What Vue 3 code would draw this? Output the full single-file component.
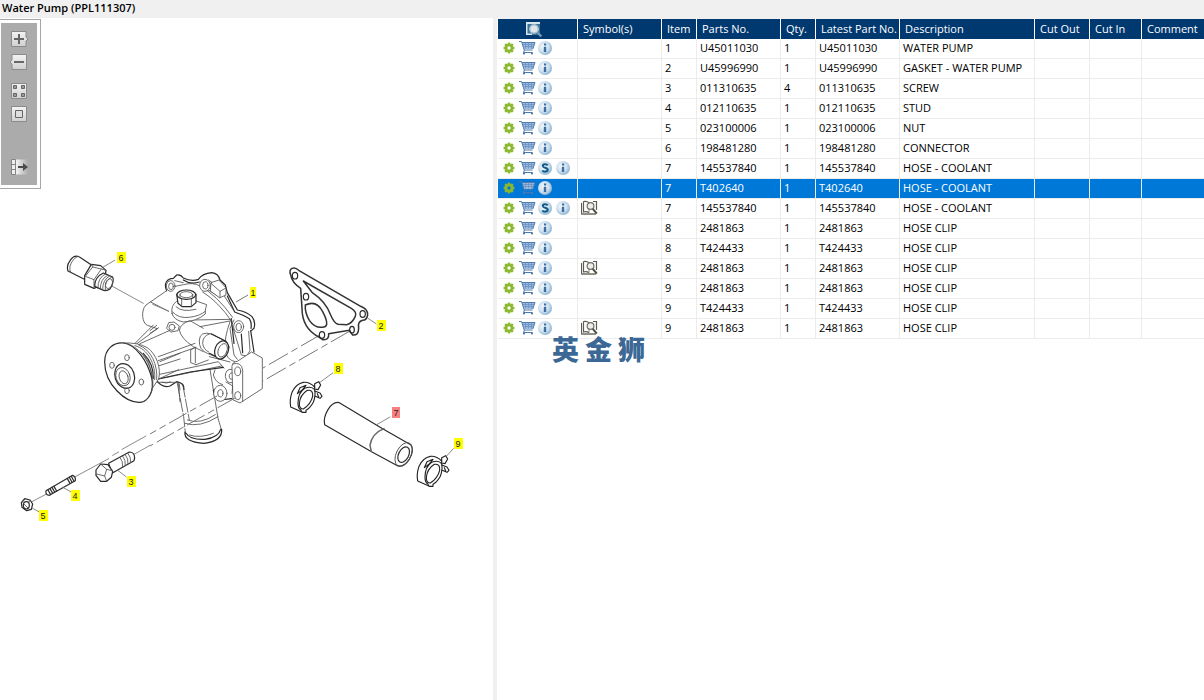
<script setup>
import { ref } from 'vue'

const rows = [
  ['1', 'U45011030', '1', 'WATER PUMP'],
  ['2', 'U45996990', '1', 'GASKET - WATER PUMP'],
  ['3', '011310635', '4', 'SCREW'],
  ['4', '012110635', '1', 'STUD'],
  ['5', '023100006', '1', 'NUT'],
  ['6', '198481280', '1', 'CONNECTOR'],
  ['7', '145537840', '1', 'HOSE - COOLANT', { sub: true }],
  ['7', 'T402640', '1', 'HOSE - COOLANT'],
  ['7', '145537840', '1', 'HOSE - COOLANT', { sub: true, book: true }],
  ['8', '2481863', '1', 'HOSE CLIP'],
  ['8', 'T424433', '1', 'HOSE CLIP'],
  ['8', '2481863', '1', 'HOSE CLIP', { book: true }],
  ['9', '2481863', '1', 'HOSE CLIP'],
  ['9', 'T424433', '1', 'HOSE CLIP'],
  ['9', '2481863', '1', 'HOSE CLIP', { book: true }],
].map(([item, part, qty, desc, flags = {}]) => ({ item, part, qty, desc, ...flags }))

const selected = ref(7)

const callouts = [
  { n: 6, x: 121, y: 258 },
  { n: 1, x: 253, y: 293 },
  { n: 2, x: 381, y: 326 },
  { n: 8, x: 338, y: 369 },
  { n: 7, x: 396, y: 413, active: true },
  { n: 9, x: 458, y: 444 },
  { n: 3, x: 131, y: 482 },
  { n: 4, x: 75, y: 496 },
  { n: 5, x: 43, y: 516 },
]
const teeth = [0, 45, 90, 135, 180, 225, 270, 315]
</script>

<template>
  <div class="app">
    <svg class="defs" aria-hidden="true">
      <defs>
        <linearGradient id="key" x1="0" y1="0" x2="0" y2="1">
          <stop offset="0" stop-color="#f4f4f4" /><stop offset="1" stop-color="#cfcfcf" />
        </linearGradient>
        <linearGradient id="fade" x1="0" y1="0" x2="1" y2="0">
          <stop offset="0" stop-color="#f4f4f4" /><stop offset="1" stop-color="#ababab" />
        </linearGradient>
        <radialGradient id="ball" cx=".4" cy=".4" r=".65">
          <stop offset="0" stop-color="#f4f9fc" /><stop offset=".55" stop-color="#cfe1ef" /><stop offset="1" stop-color="#86afd0" />
        </radialGradient>
        <symbol id="i-gear" viewBox="0 0 18 18">
          <g fill="#8bb92e">
            <rect v-for="a in teeth" :key="a" x="7.700" y="3.600" width="2.600" height="3" :transform="`rotate(${a} 9 9)`" />
          </g>
          <circle cx="9" cy="9" r="2.900" fill="none" stroke="#8bb92e" stroke-width="2.400" />
        </symbol>
        <symbol id="i-cart" viewBox="0 0 18 18">
          <path d="M4 3.500h13l-2.200 6.500H6z" fill="#9dbbe0" />
          <path d="M1 2.500h2.500l2.700 8.500h8.300M4 3.500h13l-2.200 6.500M6.500 11l-1 2.500h9" fill="none" stroke="#4d78ab" stroke-width="1" />
          <path d="M5 5.500h11M5.500 7.500h10M7.500 3.500v6M10.500 3.500v6M13.500 3.500v6" fill="none" stroke="#6b92c2" stroke-width=".8" />
          <circle cx="6" cy="14.500" r="1.100" fill="#4d78ab" /><circle cx="14" cy="14.500" r="1.100" fill="#4d78ab" />
        </symbol>
        <symbol id="i-info" viewBox="0 0 18 18">
          <circle cx="9" cy="9" r="7" fill="url(#ball)" />
          <path d="M8 4.600h2.200v1.900H8zM7.800 7.800h2.400V13H7.800z" fill="#3d6ea3" />
        </symbol>
        <symbol id="i-sub" viewBox="0 0 18 18">
          <circle cx="9" cy="9" r="7" fill="url(#ball)" />
          <path d="M11.700 6.400C10.600 4.800 6.700 4.900 6.800 7c.1 2.300 4.900 1.300 4.900 3.800 0 2.300-4.300 2.300-5.400.7" fill="none" stroke="#12598a" stroke-width="2" />
        </symbol>
        <symbol id="i-book" viewBox="0 0 18 16">
          <path d="M.5 3v11h14.500M2.500 1.500v10.500c2.500-.8 4-.5 5.500.8M2.500 1.500c2.500-.6 4 0 5.500 1.200M15.500 10V1.500h-3.500" fill="none" stroke="#5d5b52" stroke-width="1.200" />
          <path d="M.5 14h14" stroke="#8b897e" stroke-width="1.600" />
          <path d="M8 2.500v10" stroke="#8b897e" />
          <circle cx="9.500" cy="6" r="3.400" fill="#eeeeea" stroke="#6f6d64" stroke-width="1.200" />
          <path d="M11.800 8.800l4 4.800" stroke="#4e4c45" stroke-width="2" />
        </symbol>
      </defs>
    </svg>

    <header class="title">Water Pump (PPL111307)</header>
    <main class="panes">
      <section class="figure">
        <svg class="drawing" viewBox="0 18 493 682" role="img" aria-label="Water Pump">
          <g class="ink">
            <g class="thin">
              <path d="M350 331L263 381M320 335L263 368" stroke-dasharray="22 4 7 4" />
            </g>

            <!-- pump body -->
            <g transform="translate(150 260) scale(.3333)">
              <g class="p">
                <path fill="#fff" d="M48 90C40 70 52 55 70 55L80 45Q92 43 100 54L145 62Q158 43 185 38Q205 38 210 62L225 76L236 100L262 148L300 165Q318 178 312 205L302 212L310 280L337 295V385L270 428L245 418L225 422Q200 425 190 395L205 480L216 515Q216 548 165 551Q112 549 105 520L100 470L82 372L60 380Q35 382 20 362L-60 350L-60 310L20 200L-12 195Q-32 165 -8 134Z" stroke="none" />
                <path class="bold" d="M50 92C40 70 52 55 70 55L80 45Q92 43 100 54Q125 66 145 58Q158 40 185 38Q205 40 210 60L226 75L232 98L262 150Q290 155 306 170Q318 185 312 205L304 212M100 60Q122 75 148 66M232 108L254 156Q282 166 298 176Q306 188 303 205" />
                <path d="M50 92L-12 135C-28 150 -24 190 -8 196L22 206M74 62L100 68M72 80L100 74Q130 66 150 78L175 90L205 108M176 60L205 82M150 78Q200 105 248 172M158 96Q205 125 245 184M210 88L250 150" />
                <ellipse cx="62" cy="78" rx="13" ry="16" fill="#fff" /><ellipse cx="63" cy="79" rx="7" ry="10" />
                <ellipse cx="165" cy="76" rx="16" ry="18" fill="#fff" /><ellipse cx="166" cy="76" rx="8" ry="11" />
                <path d="M181 92L183 68L207 60L228 84V105L210 113ZM210 113V94L228 84M183 70L210 94" fill="#fff" />
                <!-- right cover bolts -->
                <path d="M252 180L240 205L252 285L262 298M240 185Q222 235 225 270Q230 300 255 305M248 200L274 285L290 288L300 272L296 214" />
                <path class="bold" d="M244 176L252 250M274 222L278 278M302 212L312 276" />
                <ellipse cx="266" cy="200" rx="15" ry="18" fill="#fff" /><ellipse cx="266" cy="201" rx="8" ry="11" />
                <!-- lower stem -->
                <path d="M82 368L100 470L106 520Q108 549 163 550Q214 547 215 515L204 478L180 325L100 335Z" fill="#fff" stroke="none" />
                <path d="M82 370L101 470L106 518M98 372L118 480" stroke-dasharray="40 6" />
                <path d="M180 328L204 475L214 508M104 490Q150 505 204 470M112 480Q150 495 196 464" />
                <path class="bold" d="M105 516Q100 545 162 550Q218 544 215 508M108 520Q120 540 165 538Q206 532 212 508" />
                <path d="M118 525Q150 536 190 520" />
                <!-- mounting block -->
                <path d="M246 318Q248 305 262 304L305 276L337 294V386L270 429L250 420Z" fill="#fff" />
                <path d="M248 312Q274 304 278 330V424" />
                <ellipse cx="263" cy="334" rx="9" ry="13" /><ellipse cx="263" cy="407" rx="9" ry="12" />
                <path d="M245 328Q226 326 226 350Q230 372 246 368M246 338Q236 340 238 352Q240 360 246 358M228 366L248 378L246 400M195 330L190 345Q196 368 218 374" />
                <path class="bold" d="M190 390Q192 412 210 420L245 416" />
                <ellipse cx="211" cy="400" rx="20" ry="24" fill="#fff" /><ellipse cx="211" cy="400" rx="8" ry="11" />
                <!-- snout webs -->
                <path d="M2 126L56 154M125 180L245 178M150 200L245 182M178 290L240 306M25 290L135 250M25 302L138 262M20 345L205 305L222 325M22 358L215 318M135 262L122 270V308L138 314M136 262V308M138 314L175 300" />
                <path class="bold" d="M10 360L120 336L220 322M20 362Q38 385 60 378L80 365Q104 370 102 388" />
                <path d="M36 367Q50 372 62 366M88 372L90 390M22 206L0 220M20 196L0 212" />
                <!-- top plug -->
                <path d="M66 160Q62 136 80 124L136 122L170 134L166 150V162Q140 184 100 186Q70 180 66 160Z" fill="#fff" />
                <path d="M68 156Q85 176 118 172Q150 168 166 154M78 140Q95 158 138 148" />
                <path class="bold" d="M80 102L84 130L96 140L124 140L138 128V102" fill="#fff" />
                <path d="M95 116V140M124 116V140" />
                <ellipse class="bold" cx="109" cy="104" rx="28" ry="14" fill="#fff" /><ellipse cx="109" cy="104" rx="19" ry="9" />
                <path d="M90 104V114M128 104V114" />
                <!-- outlet port -->
                <path d="M88 210Q92 190 120 182L160 205M88 210Q92 235 130 260L160 275" />
                <path d="M185 222Q150 212 148 240Q146 270 172 280L215 298L238 262L230 246Z" fill="#fff" />
                <path d="M178 222Q158 228 158 250Q160 268 176 276" />
                <path class="bold" d="M184 222L228 244M178 280L212 297" />
                <ellipse class="bold" cx="215" cy="270" rx="20" ry="28" transform="rotate(22 215 270)" fill="#fff" /><ellipse cx="218" cy="271" rx="13" ry="21" transform="rotate(22 218 271)" />
                <!-- small bolt -->
                <path d="M50 204L56 188L72 186L88 198L84 212L64 216Z" fill="#fff" /><ellipse cx="66" cy="202" rx="9" ry="9" />
              </g>
            </g>

            <!-- flange and connector -->
            <g transform="translate(60 245) scale(.3333)">
              <g class="p">
                <path d="M150 120L250 175M278 178L325 198" class="thin2" />
                <path d="M280 240L218 302M296 248L228 298M330 256L240 296M300 350L360 325M298 362L360 342M290 405L356 374M290 412H356M355 415L360 470" />
                <path d="M190 294Q235 292 262 308C290 328 304 370 296 402L270 440Z" fill="#fff" />
                <path d="M225 302C265 312 288 360 284 404M236 300C274 314 294 360 290 404M240 320C262 335 275 370 275 396" />
                <path d="M250 325C270 345 281 370 280 400" class="bold" />
                <path class="bold" d="M134 350C134 312 160 292 190 294C226 298 262 346 275 398C284 440 264 470 240 472C198 474 134 420 134 350Z" fill="#fff" />
                <path d="M190 294C232 296 272 350 278 400C282 440 268 464 248 471" />
                <ellipse class="bold" cx="194" cy="393" rx="29" ry="38" transform="rotate(-18 194 393)" />
                <ellipse cx="189" cy="395" rx="21" ry="28" transform="rotate(-18 189 395)" /><ellipse cx="191" cy="397" rx="13" ry="20" transform="rotate(-18 191 397)" />
                <ellipse cx="201" cy="338" rx="7" ry="9" /><ellipse cx="156" cy="361" rx="7" ry="9" /><ellipse cx="244" cy="411" rx="7" ry="9" /><ellipse cx="201" cy="437" rx="7" ry="9" />
                <path class="bold" d="M62 38Q45 26 32 44Q18 62 24 78L76 104L100 64Z" fill="#fff" />
                <path d="M54 34Q36 42 30 64Q28 76 32 82" />
                <path class="bold" d="M94 58L122 62L138 76L136 88L112 126L102 130L74 118V92Z" fill="#fff" />
                <path d="M94 58L98 66L124 72L138 76M98 66L76 94L102 104L124 72M102 104V128" />
                <path class="bold" d="M130 84L158 96Q164 110 150 132Q138 140 126 134L104 124Q104 96 130 84Z" fill="#fff" />
                <path d="M138 86Q112 98 114 130M144 90Q120 102 121 132M150 92Q127 104 128 134M156 96Q132 106 136 136" />
                <ellipse cx="147" cy="116" rx="10" ry="15" transform="rotate(20 147 116)" /><path class="thin2" d="M130 66L164 46" />
              </g>
            </g>

            <!-- gasket -->
            <g transform="translate(270 255) scale(.3333)">
              <g class="p">
                <path class="gasket" d="M62 60C54 38 74 34 86 46L272 154Q294 162 293 180Q290 196 278 196Q262 200 266 220Q266 242 248 240L238 226L176 236Q178 256 158 254L146 246Q96 220 96 160L92 100Q66 84 62 60Z" />
                <path class="gasket" d="M100 78L244 160Q262 172 256 184Q246 206 230 209L204 208Q192 204 182 180Q168 140 126 112ZM106 150Q140 134 158 170Q180 212 162 216Q136 222 118 196Q104 172 106 150Z" />
                <ellipse cx="75" cy="62" rx="8" ry="10" class="bold" /><ellipse cx="108" cy="125" rx="8" ry="10" class="bold" /><ellipse cx="278" cy="177" rx="8" ry="10" class="bold" /><ellipse cx="246" cy="224" rx="7" ry="10" class="bold" /><ellipse cx="156" cy="240" rx="8" ry="10" class="bold" />
                <path class="thin2" d="M294 190L318 206M150 382L188 354M322 508L360 486" />
              </g>
            </g>
            <!-- hose clips -->
            <g v-for="(c, k) in [[270, 255], [397, 329]]" :key="k" :transform="`translate(${c[0]} ${c[1]}) scale(.3333)`">
              <g class="p clip">
                <path d="M134 396Q118 380 100 382Q78 386 66 412Q58 434 62 456L94 470" />
                <path d="M82 416L90 398L108 391L96 406Z" />
                <path d="M84 444Q84 414 104 400Q124 392 134 404Q138 420 130 442Q120 460 108 466V472H96L92 464Q84 460 84 444Z" fill="#fff" />
                <path d="M88 446Q90 420 112 406Q130 404 128 424Q122 448 100 462Q88 462 88 446Z" />
                <path d="M134 386L146 380L152 390L144 404L134 402ZM134 408L150 414L156 424L150 430L136 424M142 416L146 426" />
              </g>
            </g>
            <!-- hose -->
            <g transform="translate(310 380) scale(.3333)">
              <g class="p">
                <path class="bold" d="M88 68C62 62 38 108 44 134L186 216L264 258Q282 262 298 238Q314 210 302 194L218 146Z" fill="#fff" />
                <path class="seam" d="M222 146Q186 160 180 196L184 214" />
                <ellipse cx="281" cy="223" rx="22" ry="38" transform="rotate(27 281 223)" /><ellipse cx="281" cy="224" rx="15" ry="25" transform="rotate(27 281 224)" class="bold" />
                <path class="thin2" d="M408 230L430 206" />
              </g>
            </g>

            <!-- screw, stud, nut -->
            <g transform="translate(10 430) scale(.3333)">
              <g class="p">
                <path class="thin2" d="M60 218L110 192M196 140L296 86M308 76L326 66M336 58L408 18M374 72L420 46" />
                <path class="bold" d="M296 100L358 66Q374 66 374 84L372 92L306 130Z" fill="#fff" />
                <path d="M330 82Q340 94 338 110M338 78Q348 90 346 106M346 74Q356 86 354 102M354 70Q364 82 362 98" />
                <path class="bold" d="M272 102L294 104L308 124L304 142L290 154H272L258 136V120Z" fill="#fff" />
                <path d="M274 104L290 118L306 122M290 118L284 138L260 132M284 138L290 154" />
                <path class="bold" d="M108 182L188 136Q198 140 196 152L118 196Q106 196 108 182Z" fill="#fff" />
                <path class="bold" d="M114 180L122 194M120 176L128 190M126 172L134 186M132 169L140 183M172 146L180 160M178 142L186 157M184 139L192 154" />
                <path class="bold" d="M44 206L60 210L68 222L64 238L50 242L36 232L34 218Z" fill="#fff" /><ellipse class="bold" cx="49" cy="226" rx="9" ry="11" /><path d="M36 218L44 208M58 212L56 220M42 222L54 234" />
                <path class="thin2" d="M322 120L348 140M158 172L184 186M66 234L88 246" />
              </g>
            </g>
            <g class="thin">
              <path d="M235 398L150 446M217 396L150 434" stroke-dasharray="20 4 7 4" />
              <path d="M236 302L248 295" />
            </g>
          </g>
          <g v-for="c in callouts" :key="c.n" class="callout" :class="{ active: c.active }">
            <rect :x="c.n === 1 ? c.x - 3 : c.x - 4" :y="c.y - 6" :width="c.active ? 8 : c.n === 1 ? 6 : 9" height="11" />
            <text :x="c.x" :y="c.y + 3">{{ c.n }}</text>
          </g>
        </svg>

        <div class="tools">
          <div class="toolbar">
            <button aria-label="Zoom in"><svg viewBox="0 0 20 18"><path d="M2.500 1.500h14.500v5.500l2 2-2 2v5.500h-14.500z" fill="url(#key)" stroke="#8b8b8b" /><path d="M10 4v10M5 9h10" stroke="#666" stroke-width="2" /></svg></button>
            <button aria-label="Zoom out"><svg viewBox="0 0 20 18"><path d="M3 1.500h14.500v15h-14.500v-5.500l-2-2 2-2z" fill="url(#key)" stroke="#8b8b8b" /><path d="M5 9h10" stroke="#666" stroke-width="2" /></svg></button>
            <button class="gap-s" aria-label="Fit to window"><svg viewBox="0 0 20 18"><path d="M2.500 1.500h15v15h-15z" fill="url(#key)" stroke="#8b8b8b" /><path d="M4.500 3.500h3v3h-3zM12.500 3.500h3v3h-3zM4.500 11.500h3v3h-3zM12.500 11.500h3v3h-3z" fill="#999" stroke="#666" /></svg></button>
            <button aria-label="Actual size"><svg viewBox="0 0 20 18"><path d="M2.500 1.500h15v15h-15z" fill="url(#key)" stroke="#8b8b8b" /><path d="M6.500 5.500h7v7h-7z" fill="#ddd" stroke="#666" /></svg></button>
            <button class="gap-l" aria-label="Toggle list"><svg viewBox="0 0 20 18"><path d="M7 1.500h12v15H7z" fill="url(#fade)" /><path d="M2.500 1.500h4v15h-4zM2.500 6.500h4M2.500 11.500h4" fill="#eee" stroke="#858585" /><path d="M9 9h7" stroke="#4c4c4c" stroke-width="2" /><path d="M14 5l5 4-5 4z" fill="#4c4c4c" /></svg></button>
          </div>
        </div>
      </section>

      <section class="parts">
        <table>
          <colgroup><col class="w80"><col class="w84"><col class="w35"><col class="w84"><col class="w35"><col class="w84"><col class="w135"><col class="w55"><col class="w52"><col></colgroup>
          <thead>
            <tr>
              <th class="find">
                <svg viewBox="0 0 18 18" aria-hidden="true">
                  <path d="M1 2h14v13H1z" fill="#3a7298" /><path d="M1 2h14v2H1zM1 4h1.500v11H1zM2 13.500h5V15H2z" fill="#d7e6ee" /><circle cx="9" cy="9" r="4.300" fill="#dfe7ec" stroke="#a3bac9" stroke-width="1.500" /><path d="M12.500 12.500l3.800 4" stroke="#6f9ab8" stroke-width="2.500" />
                </svg>
              </th>
              <th>Symbol(s)</th><th>Item</th><th>Parts No.</th><th>Qty.</th><th>Latest Part No.</th><th>Description</th><th>Cut Out</th><th>Cut In</th><th>Comment</th>
            </tr>
          </thead>
          <tbody>
            <tr v-for="(r, i) in rows" :key="i" :class="{ selected: i === selected }" @click="selected = i">
              <td class="actions">
                <div class="icons">
                  <button aria-label="Options"><svg><use href="#i-gear" /></svg></button>
                  <button aria-label="Add to cart"><svg><use href="#i-cart" /></svg></button>
                  <button v-if="r.sub" aria-label="Supersession"><svg><use href="#i-sub" /></svg></button>
                  <button aria-label="Information"><svg><use href="#i-info" /></svg></button>
                </div>
              </td>
              <td><svg v-if="r.book" class="book" aria-hidden="true"><use href="#i-book" /></svg></td>
              <td>{{ r.item }}</td><td>{{ r.part }}</td><td>{{ r.qty }}</td><td>{{ r.part }}</td><td>{{ r.desc }}</td><td></td><td></td><td></td>
            </tr>
          </tbody>
        </table>
        <div class="brand"><span>英</span><span>金</span><span>狮</span></div>
      </section>
    </main>
  </div>
</template>

<style>
body { background: #fff; }
</style>

<style scoped>
.app { min-height: 100vh; display: flex; flex-direction: column; font: 11px/16px "Open Sans", "Noto Sans", sans-serif; color: #000; overflow: hidden; }
.defs { position: absolute; width: 0; height: 0; }
.title { height: 18px; line-height: 16px; padding-left: 2px; background: #f0f0f0; font-weight: 600; }
.panes { flex: 1; display: flex; }
.figure { position: relative; flex: 0 0 493px; border-right: 4px solid #f0f0f0; }
.drawing { display: block; width: 100%; }
.tools { position: absolute; left: 0; top: 1px; border: 1px solid #a6a6a6; border-left: 0; padding: 3px; padding-left: 1px; background: #fff; }
.toolbar { width: 36px; height: 162px; background: #ababab; box-sizing: border-box; padding: 7px 0 0 8px; display: flex; flex-direction: column; gap: 5px; }
button { border: 0; padding: 0; margin: 0; background: none; display: block; cursor: pointer; }
.toolbar button { width: 20px; height: 18px; }
.toolbar button svg { display: block; width: 20px; height: 18px; }
.toolbar .gap-s { margin-top: 6px; }
.toolbar .gap-l { margin-top: 30px; }

.parts { flex: 1; min-width: 0; padding-left: 1px; border-top: 1px solid #f0f0f0; }
table { width: 100%; table-layout: fixed; border-collapse: separate; border-spacing: 0; }
.w80 { width: 80px; } .w84 { width: 84px; } .w35 { width: 35px; } .w135 { width: 135px; } .w55 { width: 55px; } .w52 { width: 52px; }
th { height: 20px; box-sizing: border-box; padding: 0 0 0 5px; background: #003870; color: #fff; font-weight: 400; text-align: left; border-right: 1px solid #fff; white-space: nowrap; }
.find { padding: 0 8px 0 0; text-align: center; }
.find svg { display: block; width: 18px; height: 18px; margin: 0 auto; }
td { height: 20px; box-sizing: border-box; padding: 0 0 0 3px; line-height: 18px; vertical-align: top; border-right: 1px solid #ececec; border-bottom: 1px solid #ececec; white-space: nowrap; }
td.actions { padding-left: 2px; }
th:last-child, td:last-child { border-right: 0; }
.selected td { background: #0078d7; color: #fff; }
.icons { display: flex; }
.icons button, .icons svg { width: 18px; height: 18px; display: block; }
.book { display: block; width: 18px; height: 16px; padding-top: 1px; }
.brand { display: flex; gap: 6px; padding-left: 54px; color: #3c6895; font: 900 27px/20px "Noto Sans CJK SC", sans-serif; }

.ink { fill: none; stroke: #222; stroke-linejoin: round; stroke-linecap: round; }
.thin { stroke: #777; stroke-width: 1; stroke-linecap: butt; }
.p { stroke-width: 2.6; stroke: #555; }
.bold { stroke-width: 3.6; stroke: #2a2a2a; }
.thin2 { stroke-width: 2.6; stroke: #777; }
.gasket { stroke-width: 4.5; stroke: #333; }
.clip { stroke-width: 3.4; stroke: #222; }
.seam { stroke-width: 4.5; stroke: #666; }
.callout rect { fill: #ff0; }
.callout text { font: 9px "Liberation Sans", sans-serif; text-anchor: middle; fill: #222; }
.callout.active rect { fill: #f88080; }
</style>
